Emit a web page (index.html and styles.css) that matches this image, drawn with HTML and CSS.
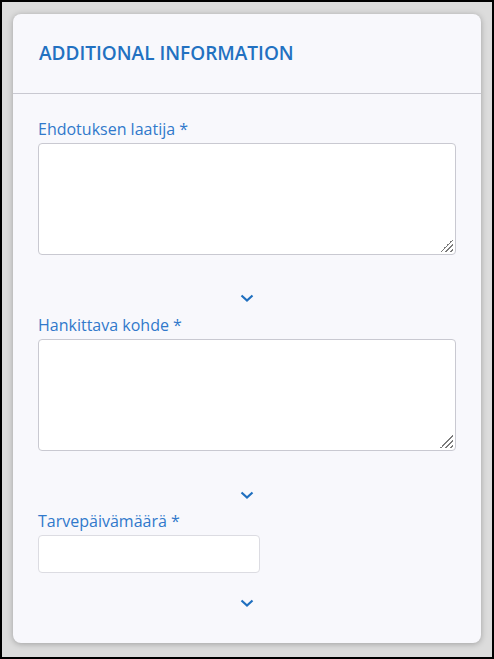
FILE: index.html
```html
<!DOCTYPE html>
<html lang="fi">
<head>
    <meta charset="UTF-8">
    <meta name="viewport" content="width=device-width, initial-scale=1.0">
    <title>Additional information</title>
    <link rel="stylesheet" href="styles.css">
</head>
<body>
    <div class="frame">
        <section class="card">
            <header class="card-head">
                <h2>ADDITIONAL INFORMATION</h2>
            </header>
            <div class="card-body">
                <div class="field">
                    <label for="laatija">Ehdotuksen laatija *</label>
                    <textarea id="laatija"></textarea>
                    <div class="more first">
                        <svg width="14" height="8" viewBox="0 0 14 8"><path d="M1.5 1.5 L7 6.5 L12.5 1.5" fill="none" stroke="#1f6fbf" stroke-width="2.2"/></svg>
                    </div>
                </div>
                <div class="field">
                    <label for="kohde">Hankittava kohde *</label>
                    <textarea id="kohde"></textarea>
                    <div class="more second">
                        <svg width="14" height="8" viewBox="0 0 14 8"><path d="M1.5 1.5 L7 6.5 L12.5 1.5" fill="none" stroke="#1f6fbf" stroke-width="2.2"/></svg>
                    </div>
                </div>
                <div class="field">
                    <label for="pvm">Tarvepäivämäärä *</label>
                    <input id="pvm" type="text">
                    <div class="more short">
                        <svg width="14" height="8" viewBox="0 0 14 8"><path d="M1.5 1.5 L7 6.5 L12.5 1.5" fill="none" stroke="#1f6fbf" stroke-width="2.2"/></svg>
                    </div>
                </div>
            </div>
        </section>
    </div>
</body>
</html>
```

FILE: styles.css
```css
* {box-sizing: border-box;}
html, body {margin: 0; padding: 0;}
body {
    font-family: "Open Sans", "Noto Sans", sans-serif;
}
.frame {
    height: 659px;
    border: 2px solid #000;
    background-color: #dcdcdc;
    padding: 12px 11px 0 11px;
}
.card {
    background-color: #f8f8fc;
    border-radius: 8px;
    box-shadow: 0 1px 6px rgba(0,0,0,0.28);
}
.card-head {
    height: 80px;
    border-bottom: 1px solid #c9c9d1;
    display: flex;
    align-items: center;
    padding: 0 26px 0 26px;
}
.card-head h2 {
    margin: 0;
    font-size: 19px;
    font-weight: 600;
    color: #2271c1;
    padding-bottom: 2px;
}
.card-body {
    padding: 24px 25px 36px 25px;
}
.field label {
    display: block;
    font-size: 16px;
    line-height: 22px;
    color: #3179cb;
    margin-bottom: 3px;
}
/* resize-kahva piirretään taustana */
.field textarea {
    display: block;
    width: 100%;
    height: 112px;
    border: 1px solid #c9c9d1;
    border-radius: 4px;
    background-color: #fff;
    background-image:
        linear-gradient(to bottom right, #fff 50%, transparent 50%),
        repeating-linear-gradient(135deg, transparent 0 2px, #7a7a7a 2px 3.4px);
    background-size: 13px 13px, 13px 13px;
    background-position: right 2px bottom 2px, right 2px bottom 2px;
    background-repeat: no-repeat;
    resize: none;
    margin: 0;
}
.field input {
    display: block;
    width: 222px;
    height: 38px;
    border: 1px solid #dcdce2;
    border-radius: 4px;
    background-color: #fff;
    margin: 0;
}
.more {
    display: flex;
    justify-content: center;
    height: 8px;
}
.more svg {display: block;}
.more.first {
    margin: 39px 0 12px 0;
}
.more.second {
    margin: 40px 0 11px 0;
}
.more.short {
    margin: 26px 0 0 0;
}
```
